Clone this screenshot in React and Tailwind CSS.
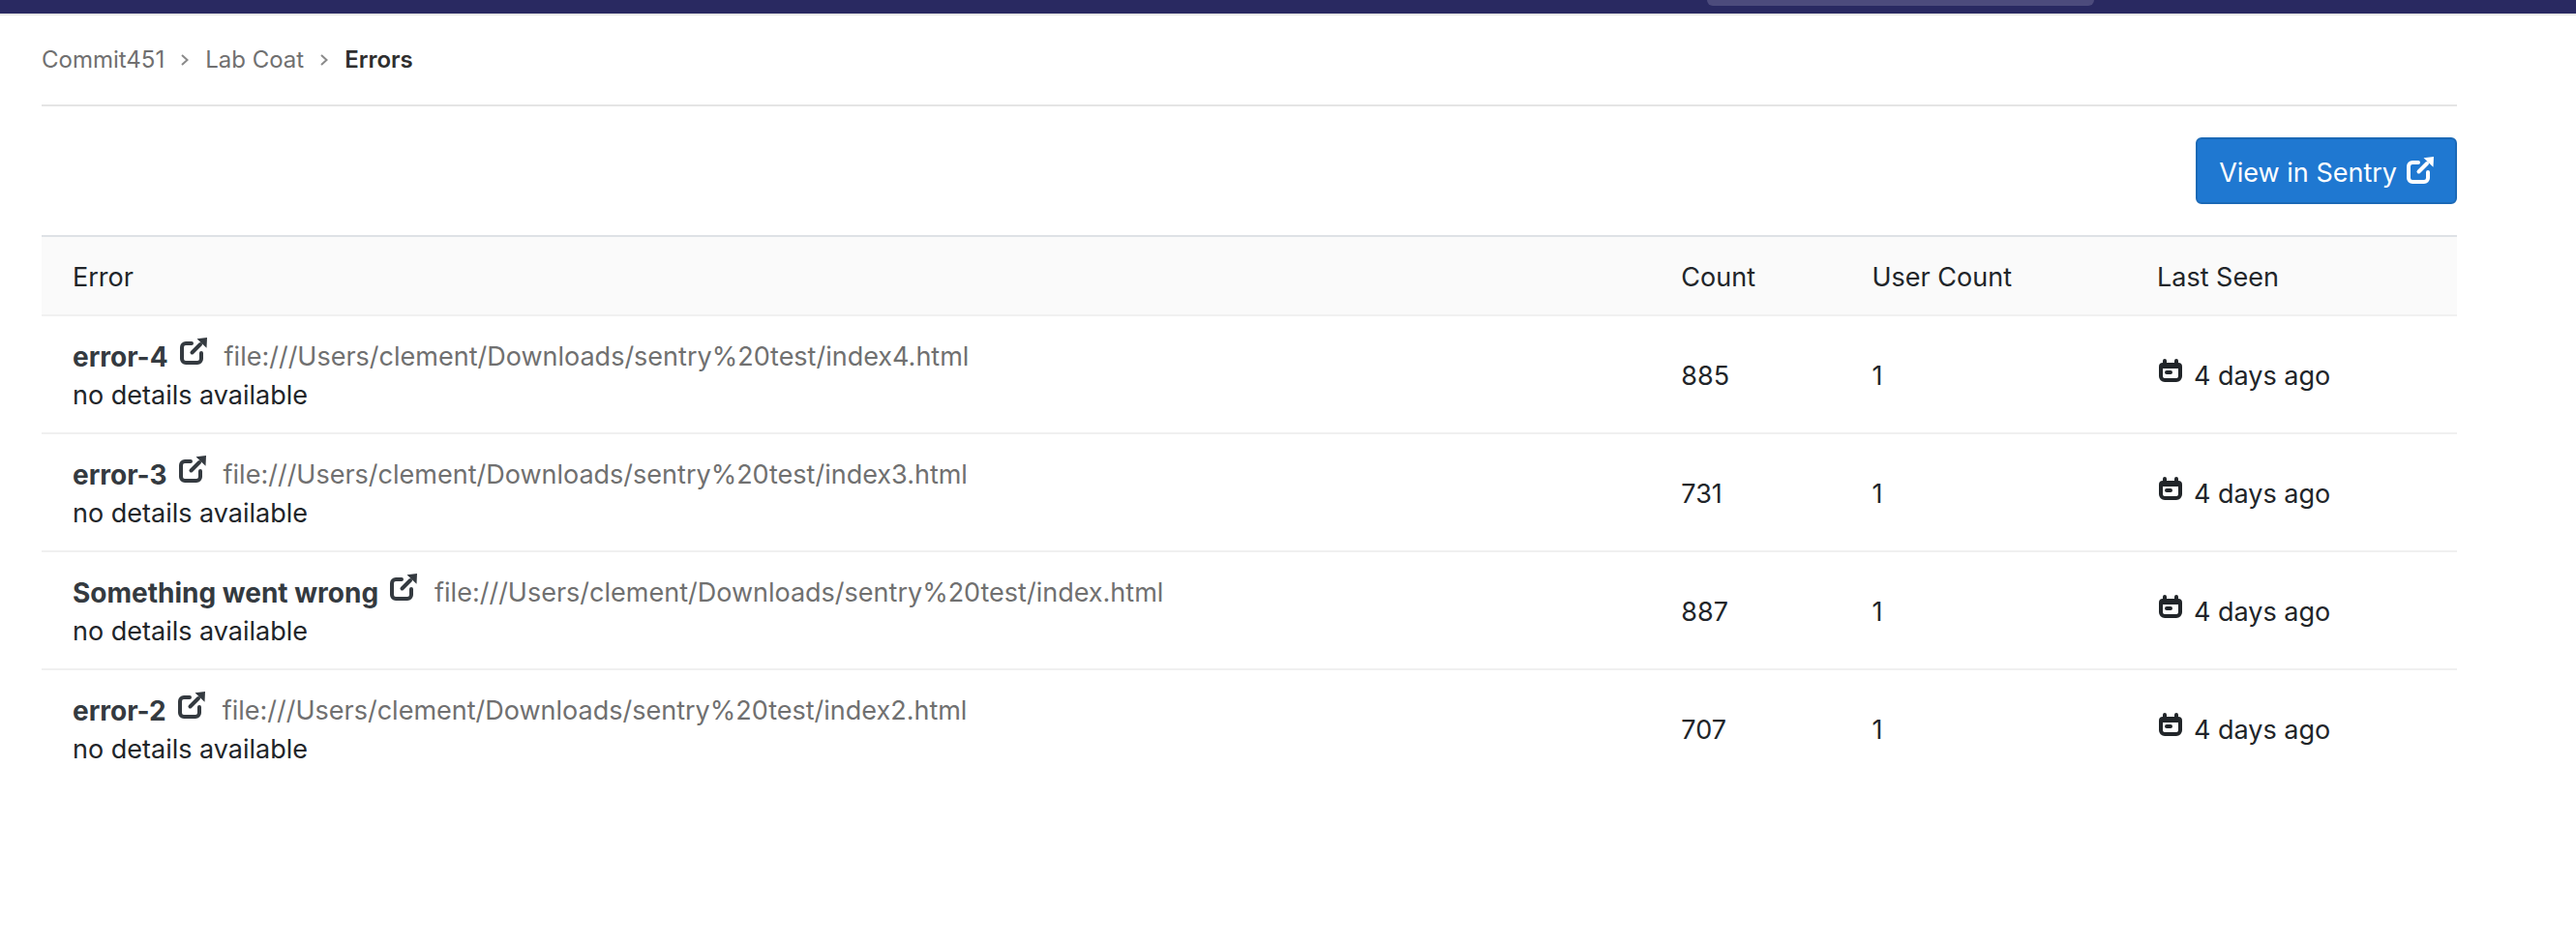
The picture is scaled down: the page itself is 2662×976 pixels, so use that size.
const errors = [
  { title: "error-4", culprit: "file:///Users/clement/Downloads/sentry%20test/index4.html", count: 885 },
  { title: "error-3", culprit: "file:///Users/clement/Downloads/sentry%20test/index3.html", count: 731 },
  { title: "Something went wrong", culprit: "file:///Users/clement/Downloads/sentry%20test/index.html", count: 887 },
  { title: "error-2", culprit: "file:///Users/clement/Downloads/sentry%20test/index2.html", count: 707 },
];

function ExternalLinkIcon({ className }) {
  return (
    <svg viewBox="0 0 28 28" className={className} aria-hidden="true">
      <path
        d="M12 6H6a4 4 0 0 0-4 4v12a4 4 0 0 0 4 4h12a4 4 0 0 0 4-4v-6M12.5 15.5L21 7"
        fill="none"
        stroke="currentColor"
        strokeWidth="4"
        strokeLinecap="round"
      />
      <path d="M17.5 1.2L28 0l-.5 10.7-3.2-2.9-3.9-3.9z" fill="currentColor" />
    </svg>
  );
}

function CalendarIcon({ className }) {
  return (
    <svg viewBox="0 0 24 24" className={className} aria-hidden="true">
      <path
        fill="currentColor"
        fillRule="evenodd"
        d="M6 0a2 2 0 0 1 2 2v2h8V2a2 2 0 0 1 4 0v2a4 4 0 0 1 4 4v10a6 6 0 0 1-6 6H6a6 6 0 0 1-6-6V8a4 4 0 0 1 4-4V2a2 2 0 0 1 2-2zM4 10v8a2 2 0 0 0 2 2h12a2 2 0 0 0 2-2v-8z"
      />
      <rect x="6" y="12" width="8" height="4" rx="2" fill="currentColor" />
    </svg>
  );
}

function Chevron() {
  return (
    <svg viewBox="0 0 8 12" className="h-3 w-2 shrink-0" aria-hidden="true">
      <path d="M1 1l5.500 5L1 11" fill="none" stroke="#8a8a8a" strokeWidth="2" />
    </svg>
  );
}

export default function App() {
  return (
    <div className="min-h-screen bg-white font-['Inter',sans-serif] text-[27px] leading-10 text-[#212529]">
      <header className="flex h-4 items-start border-b-2 border-[#e5e5e5] bg-[#292961]">
        <div className="ml-[66.27%] h-1.5 w-[400px] rounded-b-lg bg-[#4c4b7c]" />
      </header>

      <main className="pr-[123px] pl-[43px]">
        <nav
          aria-label="Breadcrumb"
          className="flex h-[94px] items-center gap-[17px] border-b-2 border-[#e5e5e5] text-[24px] text-[#707070]"
        >
          <a href="#group">Commit451</a>
          <Chevron />
          <a href="#project">Lab Coat</a>
          <Chevron />
          <a href="#errors" className="font-semibold text-[#2e2e2e]">Errors</a>
        </nav>

        <div className="flex justify-end py-8">
          <a
            href="#sentry"
            className="flex h-[69px] items-center gap-2.5 rounded-md border-2 border-[#1b69b6] bg-[#1f78d1] px-[22px] pt-1 text-white"
          >
            View in Sentry
            <ExternalLinkIcon className="mb-1.5 size-7" />
          </a>
        </div>

        <table className="w-full table-fixed border-separate border-spacing-0 text-left">
          <thead>
            <tr className="bg-[#fafafa]">
              <th className="w-[66.6%] border-t-2 border-b-2 border-t-[#dee2e6] border-b-[#f0f0f0] px-8 pt-[22px] pb-[18px] font-normal">Error</th>
              <th className="w-[7.9%] border-t-2 border-b-2 border-t-[#dee2e6] border-b-[#f0f0f0] px-8 pt-[22px] pb-[18px] font-normal">Count</th>
              <th className="w-[11.8%] border-t-2 border-b-2 border-t-[#dee2e6] border-b-[#f0f0f0] px-8 pt-[22px] pb-[18px] font-normal">User Count</th>
              <th className="border-t-2 border-b-2 border-t-[#dee2e6] border-b-[#f0f0f0] px-8 pt-[22px] pb-[18px] font-normal">Last Seen</th>
            </tr>
          </thead>
          <tbody className="[&>tr:not(:last-child)>td]:border-b-2 [&>tr>td]:border-[#f0f0f0]">
            {errors.map((error) => (
              <tr key={error.title}>
                <td className="px-8 pt-[22px] pb-[18px]">
                  <div className="flex items-center">
                    <a href="#error" className="flex items-center gap-3 text-[28px] font-bold text-[#343a40]">
                      {error.title}
                      <ExternalLinkIcon className="mb-3 size-7" />
                    </a>
                    <span className="ml-[18px] text-[#707070]">{error.culprit}</span>
                  </div>
                  <div>no details available</div>
                </td>
                <td className="px-8 pt-[22px] pb-[18px]">{error.count}</td>
                <td className="px-8 pt-[22px] pb-[18px]">1</td>
                <td className="px-8 pt-[22px] pb-[18px]">
                  <div className="flex items-center gap-3 pl-0.5">
                    <CalendarIcon className="mb-3 size-6" />
                    <time>4 days ago</time>
                  </div>
                </td>
              </tr>
            ))}
          </tbody>
        </table>
      </main>
    </div>
  );
}
